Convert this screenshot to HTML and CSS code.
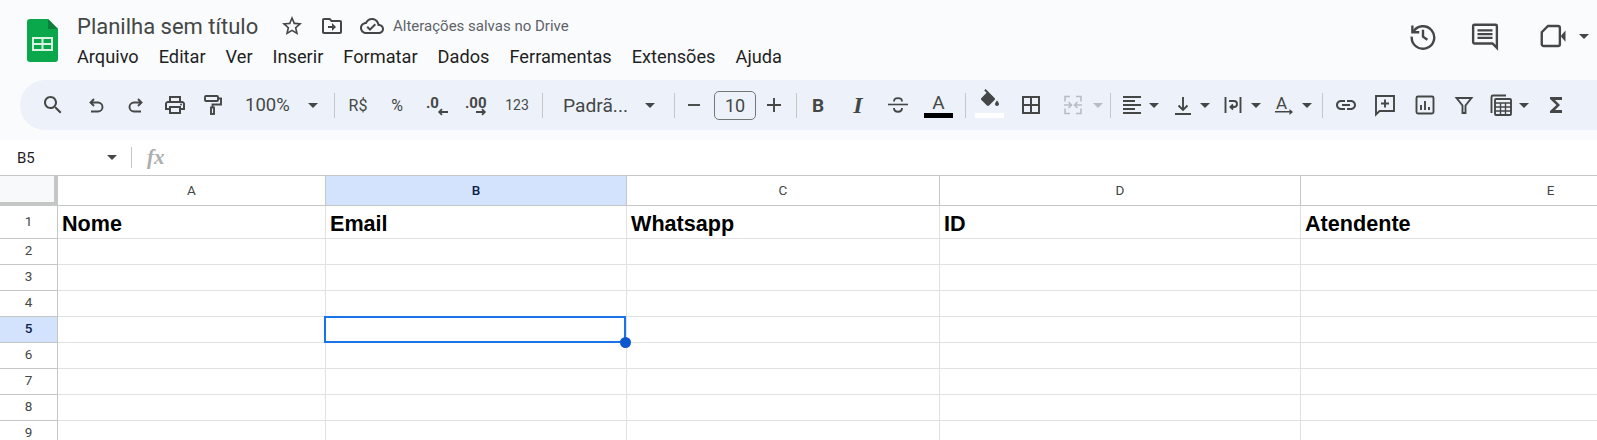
FILE: index.html
```html
<!DOCTYPE html>
<html lang="pt-br">
<head>
    <meta charset="UTF-8">
    <meta name="viewport" content="width=device-width, initial-scale=1.0">
    <title>Planilha sem título</title>
    <link rel="stylesheet" href="styles.css">
</head>
<body>
    <!-- Topo -->
    <div class="top">
        <header class="header">
            <svg class="logo" viewBox="0 0 31 43">
                <path fill="#0aa84b" d="M3 0h18l10 10v30a3 3 0 0 1-3 3H3a3 3 0 0 1-3-3V3a3 3 0 0 1 3-3z"/>
                <path fill="#0b7f3a" d="M21 0l10 10H21z"/>
                <path fill="#d9f2e2" fill-rule="evenodd" d="M5 18h21v14H5zM7 20v4h7.5v-4zM16.5 20v4H24v-4zM7 26v4h7.5v-4zM16.5 26v4H24v-4z"/>
            </svg>
            <div class="doc">
                <div class="doc-title">
                    <span class="doc-name">Planilha sem título</span>
                    <svg class="ic" viewBox="0 0 24 24"><path d="M22 9.24l-7.19-.62L12 2 9.19 8.63 2 9.24l5.46 4.73L5.82 21 12 17.27 18.18 21l-1.63-7.03L22 9.24zM12 15.4l-3.76 2.27 1-4.28-3.32-2.88 4.38-.38L12 6.1l1.71 4.04 4.38.38-3.32 2.88 1 4.28L12 15.4z"/></svg>
                    <svg class="ic" viewBox="0 0 24 24"><path d="M20 6h-8l-2-2H4c-1.11 0-1.99.89-1.99 2L2 18c0 1.11.89 2 2 2h16c1.11 0 2-.89 2-2V8c0-1.11-.89-2-2-2zm0 12H4V6h5.17l2 2H20v10zm-8-4H8v-2h4V9l4 4-4 4v-3z"/></svg>
                    <svg class="ic" viewBox="0 0 24 24"><path d="M19.35 10.04C18.67 6.59 15.64 4 12 4 9.11 4 6.6 5.64 5.35 8.04 2.34 8.36 0 10.91 0 14c0 3.31 2.69 6 6 6h13c2.76 0 5-2.24 5-5 0-2.64-2.05-4.78-4.65-4.96zM19 18H6c-2.21 0-4-1.79-4-4 0-2.05 1.53-3.76 3.56-3.97l1.07-.11.5-.95C8.08 7.14 9.94 6 12 6c2.62 0 4.88 1.86 5.39 4.43l.3 1.5 1.53.11c1.56.1 2.78 1.41 2.78 2.96 0 1.65-1.35 3-3 3zm-9-3.82l-2.09-2.09L6.5 13.5 10 17l6.01-6.01-1.41-1.41z"/></svg>
                    <span class="doc-status">Alterações salvas no Drive</span>
                </div>
                <nav class="menu">
                    <span>Arquivo</span>
                    <span>Editar</span>
                    <span>Ver</span>
                    <span>Inserir</span>
                    <span>Formatar</span>
                    <span>Dados</span>
                    <span>Ferramentas</span>
                    <span>Extensões</span>
                    <span>Ajuda</span>
                </nav>
            </div>
            <div class="actions">
                <svg class="ic-big stroke" viewBox="0 0 24 24"><path d="M3.500 3.500v5.500H9"/><path d="M4 9a9 9 0 1 1-1 3.500"/><path d="M12 7v5.500l3.500 2.500"/></svg>
                <svg class="ic-big stroke" viewBox="0 0 24 24"><path d="M3.500 3h17c.5 0 1 .5 1 1v17.500L18 18H3.500c-.5 0-1-.5-1-1V4c0-.5.5-1 1-1z"/><path d="M6 7.500h12M6 10.500h12M6 13.500h12" stroke-width="1.800"/></svg>
                <svg class="ic-big stroke cam" viewBox="0 0 24 24"><path d="M8 4h8c.8 0 1.500.7 1.500 1.500v13c0 .8-.7 1.500-1.500 1.500H4.500C3.700 20 3 19.300 3 18.500V9z"/><path class="solid" d="M18.500 11.500l3.500-4v9l-3.500-4z"/></svg>
                <span class="arrow"></span>
            </div>
        </header>

        <!-- Barra de ferramentas -->
        <div class="toolbar">
            <svg class="ic" viewBox="0 0 24 24"><path d="M15.500 14h-.79l-.28-.27C15.410 12.590 16 11.110 16 9.500 16 5.910 13.090 3 9.500 3S3 5.910 3 9.500 5.910 16 9.500 16c1.610 0 3.090-.59 4.230-1.570l.27.28v.79l5 4.990L20.490 19l-4.990-5zm-6 0C7.010 14 5 11.990 5 9.500S7.010 5 9.500 5 14 7.010 14 9.500 11.990 14 9.500 14z"/></svg>
            <svg class="ic stroke" viewBox="0 0 24 24"><path d="M10 6L6.500 9.500 10 13M6.500 9.500H14a4.500 4.500 0 0 1 0 9H7"/></svg>
            <svg class="ic stroke" viewBox="0 0 24 24"><path d="M14 6l3.500 3.500L14 13M17.500 9.500H10a4.500 4.500 0 0 0 0 9h7"/></svg>
            <svg class="ic" viewBox="0 0 24 24"><path d="M19 8h-1V3H6v5H5c-1.660 0-3 1.340-3 3v6h4v4h12v-4h4v-6c0-1.660-1.340-3-3-3zM8 5h8v3H8V5zm8 12v2H8v-4h8v2zm2-2v-2H6v2H4v-4c0-.55.45-1 1-1h14c.55 0 1 .45 1 1v4h-2z"/><circle cx="18" cy="11.500" r="1"/></svg>
            <svg class="ic stroke" viewBox="0 0 24 24"><rect x="4" y="3" width="13" height="5" rx="1"/><path d="M17 5.500h3v6h-8.500v3"/><rect x="10" y="14.500" width="3" height="6.500"/></svg>
            <span class="txt">100%</span>
            <span class="arrow"></span>
            <span class="sep"></span>
            <span class="txt cell">R$</span>
            <span class="txt cell">%</span>
            <svg class="ic" viewBox="0 0 24 24"><text class="dec" x="0" y="15">.0</text><path class="dec-arrow" d="M22 19h-9M16 16.200L13.200 19l2.800 2.800"/></svg>
            <svg class="ic" viewBox="0 0 24 24"><text class="dec" x="0" y="15">.00</text><path class="dec-arrow" d="M11 19h9M17 16.200l2.800 2.800-2.800 2.800"/></svg>
            <span class="txt cell small">123</span>
            <span class="sep"></span>
            <span class="txt font">Padrã...</span>
            <span class="arrow"></span>
            <span class="sep"></span>
            <svg class="ic stroke" viewBox="0 0 24 24"><path d="M6 12h12"/></svg>
            <span class="size-box">10</span>
            <svg class="ic stroke" viewBox="0 0 24 24"><path d="M12 5v14M5 12h14"/></svg>
            <span class="sep"></span>
            <span class="glyph bold">B</span>
            <span class="glyph italic">I</span>
            <svg class="ic stroke" viewBox="0 0 24 24"><path d="M2 11.500h20" stroke-width="1.600"/><path d="M8 8.500c0-4.500 8-4.500 8 0M8 15c0 5 8 5 8 0"/></svg>
            <div class="color">
                <span class="color-a">A</span>
                <span class="color-bar black"></span>
            </div>
            <span class="sep"></span>
            <div class="color">
                <svg class="ic" viewBox="0 0 24 24"><path d="M16.560 8.940L7.620 0 6.210 1.410l2.380 2.380-5.150 5.150c-.59.59-.59 1.540 0 2.120l5.500 5.500c.29.29.68.44 1.060.44s.77-.15 1.060-.44l5.500-5.500c.59-.58.59-1.530 0-2.120zM19 11.500s-2 2.170-2 3.500c0 1.100.9 2 2 2s2-.9 2-2c0-1.330-2-3.500-2-3.500z"/></svg>
                <span class="color-bar white"></span>
            </div>
            <svg class="ic" viewBox="0 0 24 24"><path d="M3 3v18h18V3H3zm8 16H5v-6h6v6zm0-8H5V5h6v6zm8 8h-6v-6h6v6zm0-8h-6V5h6v6z"/></svg>
            <svg class="ic stroke off" viewBox="0 0 24 24"><path d="M9 3.500H4v5M4 15.500v5h5M15 3.500h5v5M20 15.500v5h-5M3 12h7M7.500 9l3 3-3 3M21 12h-7M16.500 9l-3 3 3 3"/></svg>
            <span class="arrow off"></span>
            <span class="sep"></span>
            <svg class="ic" viewBox="0 0 24 24"><path d="M15 15H3v2h12v-2zm0-8H3v2h12V7zM3 13h18v-2H3v2zm0 8h18v-2H3v2zM3 3v2h18V3H3z"/></svg>
            <span class="arrow"></span>
            <svg class="ic stroke" viewBox="0 0 24 24"><path d="M12 4v13M7.500 12.500L12 17l4.500-4.500M4 21h16"/></svg>
            <span class="arrow"></span>
            <svg class="ic stroke" viewBox="0 0 24 24"><path d="M4.500 4v16M19.500 4v16M8 8h5a3 3 0 0 1 0 6H9.500M12 11.500L9.500 14l2.500 2.500"/></svg>
            <span class="arrow"></span>
            <svg class="ic" viewBox="0 0 24 24"><text class="rot" x="4" y="16">A</text><path d="M3 18h14.500v-2L21 19l-3.500 3v-2.500H3z"/></svg>
            <span class="arrow"></span>
            <span class="sep"></span>
            <svg class="ic" viewBox="0 0 24 24"><path d="M17 7h-4v2h4c1.650 0 3 1.350 3 3s-1.350 3-3 3h-4v2h4c2.760 0 5-2.240 5-5s-2.240-5-5-5zm-6 8H7c-1.650 0-3-1.350-3-3s1.350-3 3-3h4V7H7c-2.760 0-5 2.240-5 5s2.240 5 5 5h4v-2zm-3-4h8v2H8z"/></svg>
            <svg class="ic stroke" viewBox="0 0 24 24"><path d="M3 3h18v15H6.500L3 21.500zM12 6.500v8M8 10.500h8"/></svg>
            <svg class="ic stroke" viewBox="0 0 24 24"><rect x="3.500" y="3.500" width="17" height="17" rx="1.500"/><path d="M8 12v5M12 8v9M16 14v3"/></svg>
            <svg class="ic stroke" viewBox="0 0 24 24"><path d="M4.500 5h15l-6 7.500V20h-3v-7.500z"/></svg>
            <svg class="ic stroke" viewBox="0 0 24 24"><path d="M2.500 20V4c0-1 .5-1.500 1.500-1.500h13"/><rect x="6" y="6" width="16" height="16" rx="1"/><path d="M6 10h16M11.500 10v12M16.500 10v12M6 14h16M6 18h16" stroke-width="1.400"/></svg>
            <span class="arrow"></span>
            <svg class="ic" viewBox="0 0 24 24"><path d="M18 4H6v2l6.500 6L6 18v2h12v-3h-7l5-5-5-5h7z"/></svg>
        </div>
    </div>

    <!-- Barra de fórmulas -->
    <div class="formula">
        <span class="name-box">B5</span>
        <span class="arrow"></span>
        <span class="formula-sep"></span>
        <span class="fx">fx</span>
    </div>

    <!-- Planilha -->
    <div class="sheet">
        <table>
            <colgroup>
                <col class="col-row"><col class="col-a"><col class="col-b"><col class="col-c"><col class="col-d"><col class="col-e">
            </colgroup>
            <tr class="heads">
                <th class="corner"></th><th>A</th><th class="on">B</th><th>C</th><th>D</th><th>E</th>
            </tr>
            <tr class="first">
                <th>1</th><td>Nome</td><td>Email</td><td>Whatsapp</td><td>ID</td><td>Atendente</td>
            </tr>
            <tr><th>2</th><td></td><td></td><td></td><td></td><td></td></tr>
            <tr><th>3</th><td></td><td></td><td></td><td></td><td></td></tr>
            <tr><th>4</th><td></td><td></td><td></td><td></td><td></td></tr>
            <tr>
                <th class="on">5</th><td></td>
                <td class="active"><div class="selection"><span class="handle"></span></div></td>
                <td></td><td></td><td></td>
            </tr>
            <tr><th>6</th><td></td><td></td><td></td><td></td><td></td></tr>
            <tr><th>7</th><td></td><td></td><td></td><td></td><td></td></tr>
            <tr><th>8</th><td></td><td></td><td></td><td></td><td></td></tr>
            <tr><th>9</th><td></td><td></td><td></td><td></td><td></td></tr>
        </table>
    </div>
</body>
</html>
```

FILE: styles.css
```css
/* Geral */
body {
    margin: 0;
    height: 440px;
    overflow: hidden;
    background: #fff;
    font-family: Roboto, Arial, sans-serif;
    color: #444746;
}

.ic {
    width: 24px;
    height: 24px;
    flex: none;
    fill: #444746;
}

.ic-big {
    width: 30px;
    height: 30px;
    flex: none;
}

.stroke {
    fill: none;
    stroke: #444746;
    stroke-width: 1.9;
}

.stroke .solid {
    fill: #444746;
    stroke: none;
}

.off {
    stroke: #b9bcc0;
    stroke-width: 1.6;
}

.arrow {
    width: 0;
    height: 0;
    flex: none;
    border-left: 5.500px solid transparent;
    border-right: 5.500px solid transparent;
    border-top: 5.500px solid #444746;
}

.arrow.off {
    border-top-color: #b9bcc0;
}

/* Topo */
.top {
    height: 140px;
    background: #f9fbfd;
}

.header {
    display: flex;
    height: 80px;
}

.logo {
    width: 31px;
    height: 43px;
    margin: 19px 0 0 27px;
    flex: none;
}

.doc {
    margin-left: 19px;
    padding-top: 13px;
}

.doc-title {
    display: flex;
    align-items: center;
    gap: 16px;
    height: 26px;
}

.doc-name {
    width: 187px;
    font-size: 22px;
    white-space: nowrap;
}

.doc-status {
    margin-left: -7px;
    font-size: 15px;
    color: #5f6368;
}

.menu {
    display: flex;
    gap: 20px;
    height: 26px;
    margin-top: 4px;
    align-items: center;
    font-size: 18.200px;
    color: #1f1f1f;
}

.actions {
    display: flex;
    align-items: center;
    height: 72px;
    margin-left: auto;
    padding-right: 8px;
    gap: 32px;
}

.actions .cam {
    margin-left: 6px;
}

.actions .arrow {
    margin-left: -21px;
}

.toolbar {
    display: grid;
    grid-template-columns: 43px 40px 39px 38px 44px 63px 26px 9px 39px 44px 39px 37px 40px 21px 82px 29px 8px 32px 48px 34px 10px 40px 40px 38px 41px 10px 44px 42px 32px 17px 10px 29px 22px 29px 21px 30px 21px 30px 20px 12px 39px 40px 39px 37px 30px 25px 24px;
    align-items: center;
    height: 50px;
    margin-left: 20px;
    padding-left: 21px;
    background: #edf2fa;
    border-radius: 25px 0 0 25px;
}

.txt {
    font-size: 18.500px;
    white-space: nowrap;
}

.font {
    font-size: 19.200px;
}

.cell {
    width: 30px;
    text-align: center;
    font-size: 16px;
}

.small {
    font-size: 14px;
}

.dec {
    font-size: 15px;
    font-weight: 700;
    fill: #444746;
}

.dec-arrow {
    fill: none;
    stroke: #444746;
    stroke-width: 1.800;
}

.rot {
    font-size: 17px;
    fill: #444746;
}

.sep {
    width: 1px;
    height: 25px;
    background: #c7c7c7;
}

.size-box {
    width: 42px;
    height: 29px;
    box-sizing: border-box;
    border: 1px solid #747775;
    border-radius: 5px;
    text-align: center;
    line-height: 27px;
    font-size: 18px;
}

.glyph {
    width: 24px;
    text-align: center;
    font-size: 19px;
}

.bold {
    font-weight: 700;
}

.italic {
    font-family: "Liberation Serif", serif;
    font-style: italic;
    font-weight: 700;
    font-size: 24px;
}

.color {
    display: flex;
    flex-direction: column;
    justify-content: flex-end;
    align-items: center;
    width: 29px;
    height: 26px;
}

.color .ic {
    margin-top: -2px;
}

.color-a {
    font-size: 19px;
    line-height: 15px;
    margin-bottom: 3px;
}

.color-bar {
    width: 29px;
    height: 5px;
    flex: none;
}

.black {
    background: #000;
}

.white {
    background: #fff;
}

/* Barra de fórmulas */
.formula {
    display: flex;
    align-items: center;
    height: 35px;
    padding-left: 17px;
    background: #fff;
}

.name-box {
    width: 90px;
    font-size: 15px;
    color: #1f1f1f;
}

.formula-sep {
    width: 1px;
    height: 21px;
    margin-left: 14px;
    background: #c7c7c7;
}

.fx {
    margin-left: 15px;
    font-family: "Liberation Serif", serif;
    font-style: italic;
    font-weight: 700;
    font-size: 21px;
    color: #adadad;
}

/* Planilha */
.sheet {
    overflow: hidden;
}

table {
    width: 1597px;
    table-layout: fixed;
    border-collapse: separate;
    border-spacing: 0;
    border-top: 1px solid #c4c7c5;
}

.col-row { width: 58px; }
.col-a { width: 268px; }
.col-b { width: 301px; }
.col-c { width: 313px; }
.col-d { width: 361px; }
.col-e { width: 500px; }

tr {
    height: 26px;
}

th,
td {
    box-sizing: border-box;
    padding: 0;
    border-right: 1px solid #e1e1e1;
    border-bottom: 1px solid #e1e1e1;
}

th {
    padding-bottom: 3px;
    font-weight: 400;
    font-size: 13.500px;
    text-align: center;
    color: #444746;
    background: #fff;
    border-color: #c4c7c5;
}

.heads th {
    padding-bottom: 2px;
}

.first {
    height: 33px;
}

.heads {
    height: 30px;
}

.first td {
    padding: 3px 0 0 4px;
    font-family: "Liberation Sans", Arial, sans-serif;
    font-weight: 700;
    font-size: 21.600px;
    color: #000;
}

.corner {
    background: #f8f9fa;
    border-right: 4px solid #c4c7c5;
    border-bottom: 4px solid #c4c7c5;
}

th.on {
    background: #d3e3fd;
    color: #0b1f4a;
    font-weight: 500;
}

/* Célula ativa */
.active {
    position: relative;
}

.selection {
    position: absolute;
    top: -1px;
    left: -2px;
    right: 0;
    bottom: -1px;
    border: 2px solid #1a73e8;
}

.handle {
    position: absolute;
    right: -7px;
    bottom: -7px;
    width: 11px;
    height: 11px;
    border-radius: 50%;
    background: #0b57d0;
}
```
